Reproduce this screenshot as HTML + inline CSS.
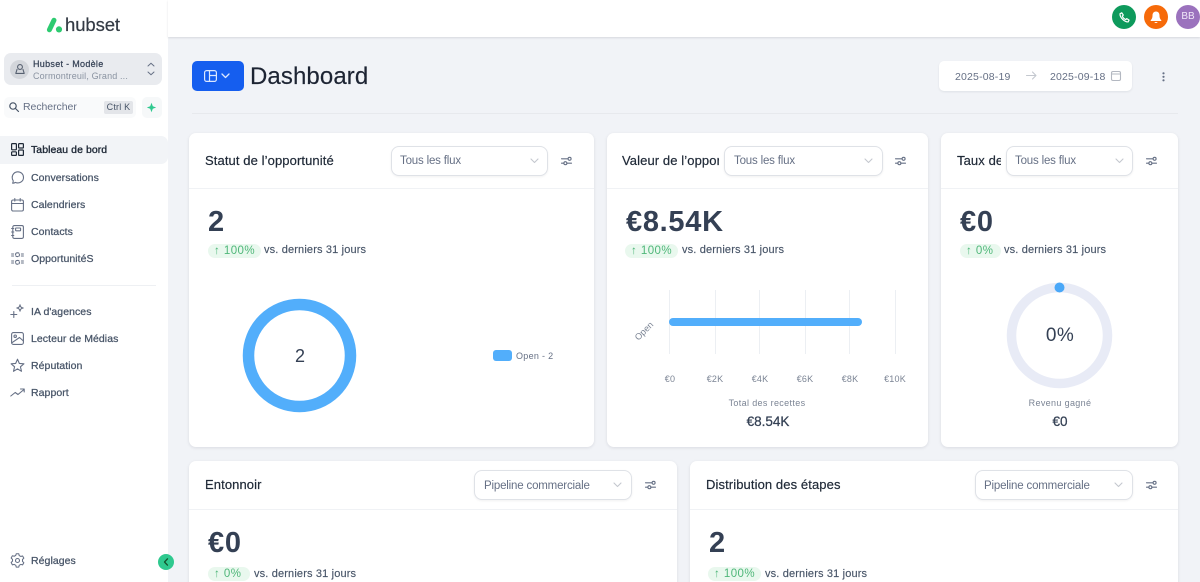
<!DOCTYPE html>
<html lang="fr"><head><meta charset="utf-8"><title>Dashboard</title>
<style>
*{box-sizing:border-box}
html,body{margin:0;padding:0;width:1200px;height:582px;overflow:hidden;background:#f1f3f7;font-family:"Liberation Sans",sans-serif}
#p{position:relative;width:1200px;height:582px;overflow:hidden;background:#f1f3f7}
.a{position:absolute;white-space:nowrap}
#side{left:0;top:0;width:168px;height:582px;background:#fff}
#top{left:168px;top:0;width:1032px;height:37px;background:#fff;box-shadow:0 1px 2px rgba(16,24,40,.12)}
.nav{left:31px;font-size:10.5px;line-height:14px;color:#475467;font-weight:400;letter-spacing:.06px;-webkit-text-stroke:.25px #475467}
svg{position:absolute;overflow:visible}
.ic{fill:none;stroke:#667085;stroke-width:1.1;stroke-linecap:round;stroke-linejoin:round}
.card{background:#fff;border-radius:7px;box-shadow:0 1px 3px rgba(16,24,40,.1)}
.hl{height:1px;background:#f0f2f5}
.title{font-size:13px;line-height:16px;color:#1f2937;letter-spacing:.1px;-webkit-text-stroke:.2px #1f2937;overflow:hidden}
.sel{height:30px;background:#fff;border:1px solid #dfe2e7;border-radius:8px;box-shadow:0 1px 2px rgba(16,24,40,.06)}
.selt{font-size:11.5px;line-height:14px;color:#667085;letter-spacing:-.18px}
.big{font-size:29px;line-height:32px;color:#344054;font-weight:700;letter-spacing:.7px}
.pill{height:14px;background:#e9f8ee;border-radius:7px;font-size:11.5px;line-height:14px;color:#4fb779;padding-left:6px;letter-spacing:.45px}
.vs{font-size:11px;line-height:14px;color:#475467;letter-spacing:.15px;-webkit-text-stroke:.15px #475467}
.tick{font-size:9px;line-height:12px;color:#7b8494;text-align:center;width:40px;letter-spacing:.2px}
.lbl{font-size:9px;line-height:12px;color:#7b8494;text-align:center;letter-spacing:.35px}
.val{font-size:13.5px;line-height:18px;color:#344054;text-align:center;-webkit-text-stroke:.25px #344054}
.vline{width:1px;height:64px;top:290px;background:#eceff3}
</style></head><body>
<div id="p">

<div class="a" id="side"></div>
<div class="a" id="top"></div>

<!-- logo -->
<svg style="left:46px;top:17px" width="18" height="16" viewBox="0 0 18 16"><path d="M3.400 12.800 8 3.200" stroke="#2ecb71" stroke-width="5" stroke-linecap="round" fill="none"/><circle cx="13" cy="12.400" r="3.100" fill="#2ecb71"/></svg>
<div class="a" style="left:65px;top:14px;font-size:18.5px;line-height:22px;color:#333a44;letter-spacing:-.1px;-webkit-text-stroke:.2px #333a44">hubset</div>

<!-- account -->
<div class="a" style="left:4px;top:53px;width:158px;height:32px;background:#e9ebef;border-radius:7px"></div>
<div class="a" style="left:10px;top:60px;width:19px;height:19px;background:#d3d6db;border-radius:50%"></div>
<svg class="ic" style="left:14px;top:63px;stroke:#566070" width="12" height="12" viewBox="0 0 12 12"><circle cx="6" cy="4" r="2.400"/><path d="M3 6.500 1.800 10.400h8.400L9 6.500"/></svg>
<div class="a" style="left:33px;top:58px;font-size:9px;line-height:12px;color:#344054;letter-spacing:.3px;-webkit-text-stroke:.2px #344054">Hubset - Modèle</div>
<div class="a" style="left:33px;top:70px;font-size:9px;line-height:12px;color:#8a93a1;letter-spacing:.15px">Cormontreuil, Grand ...</div>
<svg class="ic" style="left:147px;top:62px;stroke:#667085;stroke-width:1" width="8" height="14" viewBox="0 0 8 14"><path d="M1 4 4 1.200 7 4M1 10l3 2.800L7 10"/></svg>

<!-- search -->
<div class="a" style="left:4px;top:97px;width:132px;height:21px;background:#f9fafb;border-radius:5px"></div>
<svg class="ic" style="left:9px;top:102px;stroke:#475467;stroke-width:1.200" width="10" height="10" viewBox="0 0 10 10"><circle cx="4" cy="4" r="3.200"/><path d="M6.500 6.500 9.500 9.500"/></svg>
<div class="a" style="left:23px;top:101px;font-size:10.5px;line-height:13px;color:#667085;letter-spacing:-.05px">Rechercher</div>
<div class="a" style="left:104px;top:101px;width:29px;height:13px;background:#e3e5e9;border-radius:2px;font-size:9px;line-height:13px;color:#475467;text-align:center;letter-spacing:.2px">Ctrl K</div>
<div class="a" style="left:142px;top:97px;width:20px;height:21px;background:#f6f8f9;border-radius:5px"></div>
<svg style="left:146px;top:102px" width="11" height="11" viewBox="0 0 11 11"><path d="M5.500 .8 6.800 4.200 10.200 5.500 6.800 6.800 5.500 10.200 4.200 6.800 .8 5.500 4.200 4.200Z" fill="#2fc98f"/></svg>

<!-- nav -->
<div class="a" style="left:0;top:136px;width:168px;height:28px;background:#f2f4f7;border-radius:0 7px 7px 0"></div>
<svg class="ic" style="left:11px;top:143px;stroke:#1f2937;stroke-width:1.200" width="13" height="13" viewBox="0 0 13 13"><rect x=".6" y=".6" width="4.800" height="6.200" rx=".8"/><rect x="7.600" y=".6" width="4.800" height="4.400" rx=".8"/><rect x=".6" y="8.800" width="4.800" height="3.600" rx=".8"/><rect x="7.600" y="7" width="4.800" height="5.400" rx=".8"/></svg>
<div class="a nav" style="top:143px;color:#1f2937;-webkit-text-stroke:.35px #1f2937">Tableau de bord</div>

<svg class="ic" style="left:11px;top:171px" width="13" height="13" viewBox="0 0 13 13"><path d="M1.600 12.200c1.200 0 2-.3 2.600-.8 3.800 1.600 8.300-.7 8.300-4.900C12.500 3.200 10 .8 6.800 .8 3.600 .8 1.200 3.300 1.200 6.500c0 1.300.4 2.400 1 3.200.1.900-.2 1.800-.6 2.500Z"/></svg>
<div class="a nav" style="top:171px">Conversations</div>

<svg class="ic" style="left:11px;top:198px" width="13" height="14" viewBox="0 0 13 14"><rect x=".6" y="2" width="11.800" height="11" rx="1.500"/><path d="M.6 5.500h11.800M3.800 .6v2.500M9.200 .6v2.500"/></svg>
<div class="a nav" style="top:198px">Calendriers</div>

<svg class="ic" style="left:11px;top:225px" width="13" height="14" viewBox="0 0 13 14"><rect x="1.800" y=".6" width="10.600" height="12.800" rx="1.500"/><rect x="4.600" y="3" width="5" height="2.800" rx=".5"/><path d="M.6 3.500h2.200M.6 7h2.200M.6 10.500h2.200"/></svg>
<div class="a nav" style="top:225px">Contacts</div>

<svg class="ic" style="left:11px;top:252px;stroke-dasharray:2 1.200" width="13" height="13" viewBox="0 0 13 13"><rect x="4.600" y=".8" width="3.800" height="3.800" rx="1.500"/><rect x="4.600" y="8.400" width="3.800" height="3.800" rx="1.500"/><path d="M.6 2h2M.6 4h2M10.400 2h2M10.400 4h2M.6 9h2M.6 11h2M10.400 9h2M10.400 11h2"/></svg>
<div class="a nav" style="top:252px">OpportunitéS</div>

<div class="a" style="left:12px;top:285px;width:144px;height:1px;background:#eef0f3"></div>

<svg class="ic" style="left:10px;top:304px" width="15" height="15" viewBox="0 0 15 15"><path d="M10 .8c.4 2 1 2.700 3.200 3.200-2.200.5-2.800 1.200-3.200 3.200C9.600 5.200 9 4.500 6.800 4 9 3.500 9.600 2.800 10 .8Z"/><path d="M3.800 7.500v6M.8 10.500h6"/></svg>
<div class="a nav" style="top:305px">IA d'agences</div>

<svg class="ic" style="left:11px;top:332px" width="13" height="13" viewBox="0 0 13 13"><rect x=".6" y=".6" width="11.800" height="11.800" rx="1.800"/><circle cx="4.200" cy="4.200" r="1.200"/><path d="M.8 10.800 8.500 5.500 12.400 9"/></svg>
<div class="a nav" style="top:332px">Lecteur de Médias</div>

<svg class="ic" style="left:10px;top:358px" width="15" height="15" viewBox="0 0 15 15"><path d="M7.500 1.200 9.300 5.400 13.900 5.800 10.400 8.800 11.500 13.300 7.500 10.900 3.500 13.300 4.600 8.800 1.100 5.800 5.700 5.400Z"/></svg>
<div class="a nav" style="top:359px">Réputation</div>

<svg class="ic" style="left:10px;top:387px" width="15" height="11" viewBox="0 0 15 11"><path d="M.8 9 5.200 5.500 8 7.500 14 2.500M10.500 2h3.700v3"/></svg>
<div class="a nav" style="top:386px">Rapport</div>

<svg class="ic" style="left:10px;top:553px" width="15" height="15" viewBox="0 0 15 15"><circle cx="7.500" cy="7.500" r="2"/><path d="M6.200 1h2.600l.5 1.900 1.600.9 1.900-.5 1.300 2.300-1.400 1.400v1.900l1.400 1.400-1.300 2.300-1.900-.5-1.600.9-.5 1.900H6.200l-.5-1.900-1.600-.9-1.900.5L.9 10.100l1.400-1.400V6.800L.9 5.400l1.300-2.300 1.900.5 1.600-.9Z" transform="translate(.3 -.2) scale(.96)"/></svg>
<div class="a nav" style="top:554px">Réglages</div>
<div class="a" style="left:158px;top:554px;width:16px;height:16px;background:#2fc98f;border-radius:50%"></div>
<svg class="ic" style="left:163px;top:558px;stroke:#14532d;stroke-width:1.300" width="6" height="8" viewBox="0 0 6 8"><path d="M4.500 .8 1.500 4l3 3.200"/></svg>

<!-- top icons -->
<div class="a" style="left:1112px;top:5px;width:24px;height:24px;background:#0e9a5c;border-radius:50%"></div>
<svg class="ic" style="left:1119px;top:12px;stroke:#fff;stroke-width:1.200" width="11" height="11" viewBox="0 0 11 11"><path d="M1 1.800 2.800.8l1.500 2.300-1 1c.6 1.500 2 2.900 3.500 3.500l1-1 2.300 1.500-1 1.800C5.500 10.200.8 5.500 1 1.800Z"/></svg>
<div class="a" style="left:1144px;top:5px;width:24px;height:24px;background:#f66a0a;border-radius:50%"></div>
<svg style="left:1150px;top:11px" width="12" height="13" viewBox="0 0 12 13"><path d="M6 .5C3.500.5 2.500 2.500 2.500 4.500c0 2.500-.7 3.500-1.800 4.800v.7h10.600v-.7C10.200 8 9.500 7 9.500 4.500 9.500 2.500 8.500.5 6 .5Z" fill="#fff"/><path d="M4.300 11a1.800 1.500 0 0 0 3.400 0Z" fill="#fff"/></svg>
<div class="a" style="left:1176px;top:5px;width:24px;height:24px;background:#9b72bd;border-radius:50%;color:#f1e8f8;font-size:10px;line-height:24px;text-align:center;letter-spacing:0">BB</div>

<!-- page head -->
<div class="a" style="left:192px;top:61px;width:52px;height:30px;background:#155eef;border-radius:5px"></div>
<svg class="ic" style="left:204px;top:70px;stroke:#dbe7ff;stroke-width:1.200" width="13" height="12" viewBox="0 0 13 12"><rect x=".6" y=".6" width="11.800" height="10.800" rx="2"/><path d="M5.500.6v10.800M5.500 5.500h6.900"/></svg>
<svg class="ic" style="left:221px;top:73px;stroke:#dbe7ff;stroke-width:1.300" width="9" height="6" viewBox="0 0 9 6"><path d="M1 1 4.500 4.500 8 1"/></svg>
<div class="a" style="left:250px;top:62px;font-size:24px;line-height:30px;color:#1d2433;letter-spacing:.1px;-webkit-text-stroke:.15px #1d2433">Dashboard</div>
<div class="a" style="left:192px;top:113px;width:986px;height:1px;background:#e7e9ed"></div>

<div class="a" style="left:939px;top:61px;width:193px;height:30px;background:#fff;border-radius:5px;box-shadow:0 1px 2px rgba(16,24,40,.08)"></div>
<div class="a" style="left:955px;top:70px;font-size:10.5px;line-height:14px;color:#667085;letter-spacing:.18px">2025-08-19</div>
<svg class="ic" style="left:1026px;top:71px;stroke:#c4c8cf" width="11" height="9" viewBox="0 0 11 9"><path d="M.5 4.500h9.500M6.500 1l3.500 3.500L6.500 8"/></svg>
<div class="a" style="left:1050px;top:70px;font-size:10.5px;line-height:14px;color:#667085;letter-spacing:.18px">2025-09-18</div>
<svg class="ic" style="left:1111px;top:71px;stroke:#b3b8c1" width="10" height="10" viewBox="0 0 10 10"><rect x=".5" y=".5" width="9" height="9" rx="1.500"/><path d="M.5 3h9"/></svg>
<svg style="left:1162px;top:72px" width="3" height="10" viewBox="0 0 3 10"><circle cx="1.500" cy="1.300" r="1.100" fill="#667085"/><circle cx="1.500" cy="4.800" r="1.100" fill="#667085"/><circle cx="1.500" cy="8.300" r="1.100" fill="#667085"/></svg>

<!-- Card 1 -->
<div class="a card" style="left:189px;top:133px;width:405px;height:314px"></div>
<div class="a hl" style="left:189px;top:188px;width:405px"></div>
<div class="a title" style="left:205px;top:153px">Statut de l’opportunité</div>
<div class="a sel" style="left:391px;top:146px;width:157px"></div>
<div class="a selt" style="left:400px;top:154px">Tous les flux</div>
<svg class="ic" style="left:530px;top:158px;stroke:#c4c8cf" width="9" height="6" viewBox="0 0 9 6"><path d="M1 1 4.500 4.500 8 1"/></svg>
<svg class="ic" style="left:561px;top:156px" width="11" height="10" viewBox="0 0 11 10"><path d="M.5 2.800H6.800M.5 7.200h2.500M5.800 7.200h4.700"/><circle cx="8.600" cy="2.800" r="1.500"/><circle cx="4.400" cy="7.200" r="1.500"/></svg>
<div class="a big" style="left:208px;top:206px">2</div>
<div class="a pill" style="left:208px;top:244px;width:53px">↑ 100%</div>
<div class="a vs" style="left:264px;top:243px">vs. derniers 31 jours</div>
<svg style="left:243px;top:299px" width="114" height="114" viewBox="0 0 114 114"><circle cx="56.500" cy="56.500" r="51" fill="none" stroke="#52aefb" stroke-width="11.500"/></svg>
<div class="a" style="left:280px;top:345px;width:40px;text-align:center;font-size:18px;line-height:22px;color:#344054">2</div>
<div class="a" style="left:493px;top:350px;width:19px;height:11px;background:#52aefb;border-radius:3px"></div>
<div class="a" style="left:516px;top:350px;font-size:9px;line-height:12px;color:#667085;letter-spacing:.3px">Open - 2</div>

<!-- Card 2 -->
<div class="a card" style="left:607px;top:133px;width:321px;height:314px"></div>
<div class="a hl" style="left:607px;top:188px;width:321px"></div>
<div class="a title" style="left:622px;top:153px;width:97px">Valeur de l’opportunité</div>
<div class="a sel" style="left:724px;top:146px;width:159px"></div>
<div class="a selt" style="left:734px;top:154px">Tous les flux</div>
<svg class="ic" style="left:864px;top:158px;stroke:#c4c8cf" width="9" height="6" viewBox="0 0 9 6"><path d="M1 1 4.500 4.500 8 1"/></svg>
<svg class="ic" style="left:895px;top:156px" width="11" height="10" viewBox="0 0 11 10"><path d="M.5 2.800H6.800M.5 7.200h2.500M5.800 7.200h4.700"/><circle cx="8.600" cy="2.800" r="1.500"/><circle cx="4.400" cy="7.200" r="1.500"/></svg>
<div class="a big" style="left:626px;top:206px">€8.54K</div>
<div class="a pill" style="left:625px;top:244px;width:53px">↑ 100%</div>
<div class="a vs" style="left:682px;top:243px">vs. derniers 31 jours</div>
<div class="a vline" style="left:669px"></div>
<div class="a vline" style="left:715px"></div>
<div class="a vline" style="left:759px"></div>
<div class="a vline" style="left:805px"></div>
<div class="a vline" style="left:849px"></div>
<div class="a vline" style="left:895px"></div>
<div class="a" style="left:669px;top:318px;width:193px;height:8px;background:#52aefb;border-radius:4px"></div>
<div class="a" style="left:629px;top:325px;width:30px;font-size:9px;line-height:12px;color:#7b8494;text-align:center;transform:rotate(-45deg)">Open</div>
<div class="a tick" style="left:650px;top:373px">€0</div>
<div class="a tick" style="left:695px;top:373px">€2K</div>
<div class="a tick" style="left:740px;top:373px">€4K</div>
<div class="a tick" style="left:785px;top:373px">€6K</div>
<div class="a tick" style="left:830px;top:373px">€8K</div>
<div class="a tick" style="left:875px;top:373px">€10K</div>
<div class="a lbl" style="left:708px;top:397px;width:118px">Total des recettes</div>
<div class="a val" style="left:708px;top:413px;width:120px">€8.54K</div>

<!-- Card 3 -->
<div class="a card" style="left:941px;top:133px;width:237px;height:314px"></div>
<div class="a hl" style="left:941px;top:188px;width:237px"></div>
<div class="a title" style="left:957px;top:153px;width:44px">Taux de conversion</div>
<div class="a sel" style="left:1006px;top:146px;width:127px"></div>
<div class="a selt" style="left:1015px;top:154px">Tous les flux</div>
<svg class="ic" style="left:1115px;top:158px;stroke:#c4c8cf" width="9" height="6" viewBox="0 0 9 6"><path d="M1 1 4.500 4.500 8 1"/></svg>
<svg class="ic" style="left:1146px;top:156px" width="11" height="10" viewBox="0 0 11 10"><path d="M.5 2.800H6.800M.5 7.200h2.500M5.800 7.200h4.700"/><circle cx="8.600" cy="2.800" r="1.500"/><circle cx="4.400" cy="7.200" r="1.500"/></svg>
<div class="a big" style="left:960px;top:206px">€0</div>
<div class="a pill" style="left:960px;top:244px;width:41px">↑ 0%</div>
<div class="a vs" style="left:1004px;top:243px">vs. derniers 31 jours</div>
<svg style="left:1006px;top:282px" width="107" height="107" viewBox="0 0 107 107"><circle cx="53.500" cy="53.500" r="48" fill="none" stroke="#e8ebf6" stroke-width="9.500"/><circle cx="53.500" cy="5.500" r="5" fill="#4aa8f8"/></svg>
<div class="a" style="left:1030px;top:324px;width:60px;text-align:center;font-size:19px;line-height:24px;color:#344054;letter-spacing:.4px">0%</div>
<div class="a lbl" style="left:1000px;top:397px;width:120px">Revenu gagné</div>
<div class="a val" style="left:1030px;top:413px;width:60px">€0</div>

<!-- Card 4 -->
<div class="a card" style="left:189px;top:461px;width:488px;height:130px"></div>
<div class="a hl" style="left:189px;top:509px;width:488px"></div>
<div class="a title" style="left:205px;top:477px">Entonnoir</div>
<div class="a sel" style="left:474px;top:470px;width:158px"></div>
<div class="a selt" style="left:484px;top:479px">Pipeline commerciale</div>
<svg class="ic" style="left:613px;top:482px;stroke:#c4c8cf" width="9" height="6" viewBox="0 0 9 6"><path d="M1 1 4.500 4.500 8 1"/></svg>
<svg class="ic" style="left:645px;top:480px" width="11" height="10" viewBox="0 0 11 10"><path d="M.5 2.800H6.800M.5 7.200h2.500M5.800 7.200h4.700"/><circle cx="8.600" cy="2.800" r="1.500"/><circle cx="4.400" cy="7.200" r="1.500"/></svg>
<div class="a big" style="left:208px;top:527px">€0</div>
<div class="a pill" style="left:208px;top:567px;width:42px">↑ 0%</div>
<div class="a vs" style="left:254px;top:567px">vs. derniers 31 jours</div>

<!-- Card 5 -->
<div class="a card" style="left:690px;top:461px;width:488px;height:130px"></div>
<div class="a hl" style="left:690px;top:509px;width:488px"></div>
<div class="a title" style="left:706px;top:477px">Distribution des étapes</div>
<div class="a sel" style="left:975px;top:470px;width:158px"></div>
<div class="a selt" style="left:984px;top:479px">Pipeline commerciale</div>
<svg class="ic" style="left:1114px;top:482px;stroke:#c4c8cf" width="9" height="6" viewBox="0 0 9 6"><path d="M1 1 4.500 4.500 8 1"/></svg>
<svg class="ic" style="left:1146px;top:480px" width="11" height="10" viewBox="0 0 11 10"><path d="M.5 2.800H6.800M.5 7.200h2.500M5.800 7.200h4.700"/><circle cx="8.600" cy="2.800" r="1.500"/><circle cx="4.400" cy="7.200" r="1.500"/></svg>
<div class="a big" style="left:709px;top:527px">2</div>
<div class="a pill" style="left:708px;top:567px;width:53px">↑ 100%</div>
<div class="a vs" style="left:765px;top:567px">vs. derniers 31 jours</div>

</div>
</body></html>
